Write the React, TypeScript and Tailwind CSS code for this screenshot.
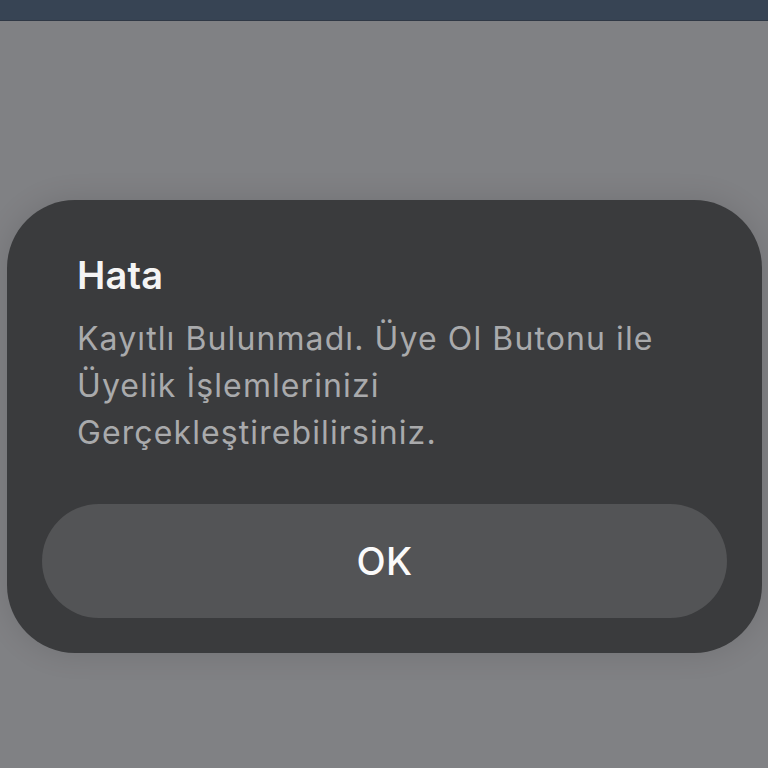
export default function App() {
  return (
    <div
      className="min-h-screen w-full bg-[#808184] antialiased"
      style={{ fontFamily: "Inter, 'Noto Sans', sans-serif" }}
    >
      {/* üst bar */}
      <div className="h-[21px] w-full bg-[#374454] border-b border-[#2f3845]" />

      <main className="pt-[179px] pl-[7px]">
        <div className="w-[755px] h-[453px] rounded-[68px] bg-[#3a3b3d] flex flex-col shadow-[0_0_30px_rgba(0,0,0,0.12)]">
          <div className="pl-[70px] pr-[30px] pt-[52px]">
            <h2 className="text-[38px] leading-[46px] font-semibold text-[#f4f4f4] tracking-[0.2px]">Hata</h2>
            <p className="mt-[17px] text-[32px] leading-[47px] text-[#a9aaac] tracking-[1.1px]">
              Kayıtlı Bulunmadı. Üye Ol Butonu ile
              <br />
              Üyelik İşlemlerinizi
              <br />
              Gerçekleştirebilirsiniz.
            </p>
          </div>
          <button className="mt-[48px] mx-[35px] h-[114px] rounded-full bg-[#535456] flex items-center justify-center text-[38px] font-medium text-[#fafafa] tracking-[0.3px]">
            OK
          </button>
        </div>
      </main>
    </div>
  );
}
